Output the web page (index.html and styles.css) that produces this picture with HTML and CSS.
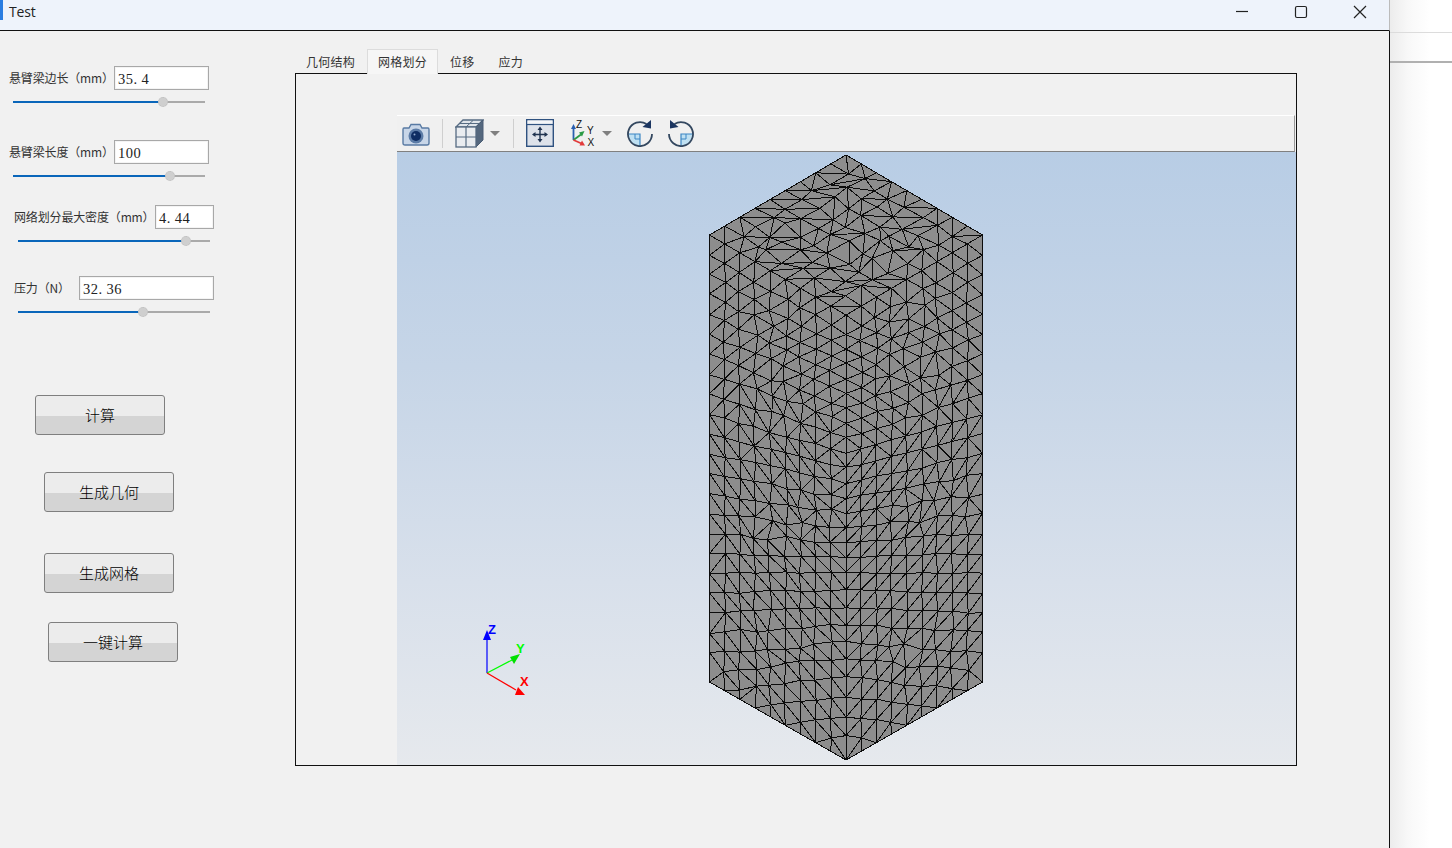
FILE: index.html
```html
<!DOCTYPE html>
<html lang="zh">
<head>
<meta charset="utf-8">
<title>Test</title>
<link rel="stylesheet" href="styles.css">
</head>
<body>
<div class="desktop">
  <div class="window">
    <header class="titlebar">
      <span class="app-icon"></span>
      <span class="title">Test</span>
      <div class="controls">
        <span class="ctrl"><svg width="14" height="14" viewBox="0 0 14 14"><path d="M1 6.500H13" class="ctrl-stroke"/></svg></span>
        <span class="ctrl"><svg width="14" height="14" viewBox="0 0 14 14"><rect x="1.500" y="1.500" width="11" height="11" rx="1.500" class="ctrl-stroke"/></svg></span>
        <span class="ctrl"><svg width="14" height="14" viewBox="0 0 14 14"><path d="M1 1L13 13M13 1L1 13" class="ctrl-stroke"/></svg></span>
      </div>
    </header>
    <main class="content">
      <aside class="sidebar">
        <div class="field f1">
          <div class="row"><label class="lbl">悬臂梁边长（mm）</label><span class="input w95">35. 4</span></div>
          <div class="slider"><div class="fill" style="width:150px"></div><span class="handle" style="left:145px"></span></div>
        </div>
        <div class="field f2">
          <div class="row"><label class="lbl">悬臂梁长度（mm）</label><span class="input w95">100</span></div>
          <div class="slider"><div class="fill" style="width:157px"></div><span class="handle" style="left:152px"></span></div>
        </div>
        <div class="field f3">
          <div class="row"><label class="lbl">网络划分最大密度（mm）</label><span class="input w59">4. 44</span></div>
          <div class="slider"><div class="fill" style="width:168px"></div><span class="handle" style="left:163px"></span></div>
        </div>
        <div class="field f4">
          <div class="row"><label class="lbl">压力（N）</label><span class="input w135">32. 36</span></div>
          <div class="slider"><div class="fill" style="width:125px"></div><span class="handle" style="left:120px"></span></div>
        </div>
        <button class="btn b1">计算</button>
        <button class="btn b2">生成几何</button>
        <button class="btn b3">生成网格</button>
        <button class="btn b4">一键计算</button>
      </aside>
      <section class="tabs">
        <nav class="tabbar">
          <span class="tab first">几何结构</span>
          <span class="tab active">网格划分</span>
          <span class="tab">位移</span>
          <span class="tab">应力</span>
        </nav>
        <div class="pane">
          <div class="viewer">
            <div class="toolbar">
              <svg class="tool t-cam" width="28" height="24" viewBox="0 0 28 24">
                <path d="M2 6H7L9 2.500H18L20 6H26Q27 6 27 7.500V21Q27 23 25 23H3Q1 23 1 21V7.500Q1 6 2 6Z" fill="#c8d6e8" stroke="#587aa3" stroke-width="1.400"/>
                <circle cx="14" cy="14" r="7.500" fill="#5b7ba6"/>
                <circle cx="14" cy="14" r="5" fill="#0e2d63"/>
                <circle cx="12.500" cy="12.500" r="1" fill="#8fa8cc"/>
              </svg>
              <span class="sep s1"></span>
              <svg class="tool t-cube" width="29" height="29" viewBox="0 0 29 29">
                <path d="M1 8L8 1H28L21 8Z" fill="#dfe4ea" stroke="#566b82" stroke-width="1.300"/>
                <path d="M21 8L28 1V21L21 28Z" fill="#54677e" stroke="#4a5d74"/>
                <rect x="1" y="8" width="20" height="20" fill="#e9ecf0" stroke="#566b82" stroke-width="1.300"/>
                <path d="M11 8V28M1 18H21" fill="none" stroke="#566b82" stroke-width="1.200"/>
                <path d="M18 1.500L11 8M4.500 4.500H24.500" fill="none" stroke="#566b82"/>
              </svg>
              <span class="caret c1"></span>
              <span class="sep s2"></span>
              <svg class="tool t-fit" width="28" height="28" viewBox="0 0 28 28">
                <rect x="0.700" y="0.700" width="26.600" height="26.600" fill="#dde2ea" stroke="#2f5280" stroke-width="1.400"/>
                <rect x="1.500" y="1.500" width="25" height="4" fill="#f3f5f8"/>
                <path d="M0.700 5.500H27.300" stroke="#2f5280" stroke-width="1.200"/>
                <path d="M14 9V22M7.500 15.500H20.500" stroke="#1f3350" stroke-width="1.400"/>
                <path d="M14 7.500L11.500 11H16.500ZM14 23.500L11.500 20H16.500ZM6 15.500L9.500 13V18ZM22 15.500L18.500 13V18Z" fill="#1f3350"/>
              </svg>
              <svg class="tool t-axes" width="24" height="30" viewBox="0 0 24 30">
                <path d="M2.500 22V10" stroke="#2a5fb0" stroke-width="1.800"/>
                <path d="M2.500 6L0 11H5Z" fill="#2a5fb0"/>
                <path d="M2.500 22L10 16.500" stroke="#2b9a45" stroke-width="1.800"/>
                <path d="M13.500 13L8 14.500L11 18.500Z" fill="#2b9a45"/>
                <path d="M2.500 22L10.500 25.500" stroke="#e23a3a" stroke-width="1.800"/>
                <path d="M14 27.500L8.500 27.500L11 22.500Z" fill="#e23a3a"/>
                <text x="5" y="10" class="axis-letter">Z</text>
                <text x="16" y="16" class="axis-letter">Y</text>
                <text x="16.500" y="28" class="axis-letter">X</text>
              </svg>
              <span class="caret c2"></span>
              <svg class="tool t-rot1" width="28" height="28" viewBox="0 0 28 28">
                <path d="M14 15V27Q7 27 3 19V15Z" fill="#bfe0f2"/>
                <path d="M2 15H14V27" fill="none" stroke="#3c86c4" stroke-width="1.200"/>
                <path d="M9 15V20H14" fill="none" stroke="#3c86c4"/>
                <path d="M20.500 5A12 12 0 1 0 26 15" fill="none" stroke="#33475f" stroke-width="1.800"/>
                <path d="M25 1L25 9.500L16.500 8Z" fill="#1b3560"/>
              </svg>
              <svg class="tool t-rot2" width="28" height="28" viewBox="0 0 28 28">
                <path d="M14 15V27Q21 27 25 19V15Z" fill="#bfe0f2"/>
                <path d="M26 15H14V27" fill="none" stroke="#3c86c4" stroke-width="1.200"/>
                <path d="M19 15V20H14" fill="none" stroke="#3c86c4"/>
                <path d="M7.500 5A12 12 0 1 1 2 15" fill="none" stroke="#33475f" stroke-width="1.800"/>
                <path d="M3 1L3 9.500L11.500 8Z" fill="#1b3560"/>
              </svg>
            </div>
            <div class="canvas">
              <svg id="scene" class="scene" width="899" height="613" viewBox="397 152 899 613">
                <g id="mesh"></g>
                <path d="M487 673V638" stroke="#0000ff" stroke-width="1.200" fill="none"/>
                <path d="M487 630L483 640H491Z" fill="#0000ff"/>
                <path d="M487 673L512 660" stroke="#00ff00" stroke-width="1.200" fill="none"/>
                <path d="M520 654L510 657L514 664Z" fill="#00e000"/>
                <path d="M487 673L516 690" stroke="#ff0000" stroke-width="1.200" fill="none"/>
                <path d="M525 695H515L518 687Z" fill="#ff0000"/>
                <text x="488" y="634" class="triad tz">Z</text>
                <text x="516" y="653" class="triad ty">Y</text>
                <text x="520" y="686" class="triad tx">X</text>
              </svg>
            </div>
          </div>
        </div>
      </section>
    </main>
  </div>
  <div class="outside">
    <div class="line-a"></div>
    <div class="line-b"></div>
  </div>
</div>
<script src="mesh.js"></script>
</body>
</html>
```
FILE: styles.css
```css
* { box-sizing: border-box; }
html, body { margin: 0; height: 100%; overflow: hidden; background: #fff; }
body { font-family: "Noto Sans CJK SC", "Liberation Sans", sans-serif; color: #222; }

.desktop { display: flex; width: 1452px; height: 848px; }
.window { width: 1390px; height: 848px; display: flex; flex-direction: column; background: #f1f1f1; }

.titlebar { height: 31px; flex: none; display: flex; align-items: flex-start; background: #eef3fb; border-bottom: 1px solid #111; border-right: 1px solid #bbb; }
.app-icon { width: 3px; height: 20px; background: #2a7de1; }
.title { margin-left: 6px; font: 14px/24px "Open Sans", "Noto Sans", sans-serif; letter-spacing: -0.200px; color: #222; }
.controls { margin-left: auto; display: flex; }
.ctrl { width: 59px; height: 23px; display: flex; align-items: center; justify-content: center; }
.ctrl-stroke { fill: none; stroke: #222; stroke-width: 1.200; }

.content { flex: 1; display: flex; border-right: 1px solid #111; min-height: 0; }
.sidebar { width: 295px; flex: none; display: flex; flex-direction: column; align-items: flex-start; }

.field { width: 200px; }
.f1 { margin: 35px 0 0 9px; }
.f2 { margin: 37px 0 0 9px; }
.f3 { margin: 28px 0 0 14px; }
.f4 { margin: 34px 0 0 14px; }
.row { display: flex; align-items: center; height: 24px; }
.lbl { flex: 1; min-width: 0; font-size: 12px; line-height: 24px; letter-spacing: -0.150px; color: #333; white-space: nowrap; }
.input { height: 24px; flex: none; display: block; background: #fff; border: 1px solid #a8a8a8; box-shadow: inset 0 0 0 1px #f4f4f4; padding-left: 3px; font: 14.500px/24px "Liberation Serif", serif; letter-spacing: 0.450px; color: #222; white-space: pre; }
.w95 { width: 95px; }
.w59 { width: 59px; }
.w135 { width: 135px; }

.slider { position: relative; width: 192px; height: 2px; margin: 11px 0 0 4px; background: #aaa; }
.fill { height: 2px; background: #0a66ba; }
.handle { position: absolute; top: -4px; width: 10px; height: 10px; border-radius: 50%; background: #cfcfcf; border: 1px dotted #bdbdbd; }

.btn { width: 130px; height: 40px; padding: 0; flex: none; border: 1px solid #7f7f7f; border-radius: 3px; background: linear-gradient(#ececec 0, #ececec 52%, #d4d4d4 52%, #d4d4d4 100%); font: 300 15px/38px "Noto Sans CJK SC", sans-serif; color: #000; }
.b1 { margin: 82px 0 0 35px; }
.b2 { margin: 37px 0 0 44px; }
.b3 { margin: 41px 0 0 44px; }
.b4 { margin: 29px 0 0 48px; }

.tabs { width: 1002px; flex: none; padding-top: 18px; display: flex; flex-direction: column; }
.tabbar { display: flex; height: 24px; align-items: flex-end; }
.tab { padding: 0 12px; font-size: 12px; line-height: 22px; letter-spacing: 0.250px; color: #333; }
.tab.first { padding: 0 12px 0 11px; }
.tab.active { height: 25px; margin-bottom: -1px; padding: 0 10px; position: relative; background: #f6f6f6; border: 1px solid #dcdcdc; border-bottom: none; line-height: 23px; }
.pane { width: 1002px; height: 693px; border: 1px solid #111; padding: 41px 0 0 101px; background: #f1f1f1; }
.viewer { width: 899px; height: 650px; display: flex; flex-direction: column; }
.toolbar { position: relative; height: 37px; flex: none; margin-right: 1px; background: #f0f0f0; border-top: 1px solid #fff; border-bottom: 1px solid #808080; border-right: 1px solid #999; }
.tool { position: absolute; display: block; }
.t-cam { left: 5px; top: 6px; }
.t-cube { left: 58px; top: 3px; }
.t-fit { left: 129px; top: 3px; }
.t-axes { left: 174px; top: 2px; }
.t-rot1 { left: 229px; top: 3px; }
.t-rot2 { left: 270px; top: 3px; }
.sep { position: absolute; top: 3px; width: 1px; height: 29px; background: #cfcfcf; }
.s1 { left: 45px; }
.s2 { left: 116px; }
.caret { position: absolute; top: 15px; width: 0; height: 0; border-left: 5px solid transparent; border-right: 5px solid transparent; border-top: 5px solid #808080; }
.c1 { left: 93px; }
.c2 { left: 205px; }
.axis-letter { font: 10px "Liberation Sans", sans-serif; fill: #111; }

.canvas { flex: 1; background: linear-gradient(#b8cde5 0, #c6d5e7 35%, #d8e0eb 70%, #e6e9ed 100%); }
.scene { display: block; }
.triad { font: bold 13px "Liberation Sans", sans-serif; }
.tz { fill: #0000ff; }
.ty { fill: #00ff00; }
.tx { fill: #ff0000; }
.mesh-fill { fill: #8d8d8d; }
.mesh-lines { fill: none; stroke: #0c0c0c; stroke-width: 1; shape-rendering: crispEdges; }

.outside { flex: 1; background: linear-gradient(90deg, #ececec 0, #f8f8f8 18px, #fff 40px); }
.line-a { height: 1px; margin-top: 32px; background: #dcdcdc; }
.line-b { height: 2px; margin-top: 28px; background: #b0b0b0; }
```
FILE: mesh.js
```js
(function () {
  var seed = 20240611;
  function rnd() {
    seed = (seed + 0x6d2b79f5) | 0;
    var t = Math.imul(seed ^ (seed >>> 15), 1 | seed);
    t = (t + Math.imul(t ^ (t >>> 7), 61 | t)) ^ t;
    return ((t ^ (t >>> 14)) >>> 0) / 4294967296;
  }
  function jit(a) { return (rnd() * 2 - 1) * a; }

  var CX = 846, LX = 709.5, RX = 982.5, TOPE = 235, BOTE = 682, TOP = 155, FRONT = 315, BOT = 760;
  var COLS = 9, segs = [];
  var patches = [[790, 400, 40], [785, 520, 45], [915, 375, 40], [935, 510, 40], [780, 650, 45], [920, 650, 45], [770, 320, 45], [910, 310, 45]];
  function amp(x, y) {
    var a = 0.6;
    patches.forEach(function (p) {
      var d = ((x - p[0]) * (x - p[0]) + (y - p[1]) * (y - p[1])) / (p[2] * p[2]);
      a += 3 * Math.exp(-d);
    });
    return a;
  }
  function slope(y) {
    if (y < 250) return 1;
    if (y < 570) return 1 - (y - 250) / 320;
    if (y < 690) return -0.2 * (y - 570) / 120;
    return -0.2;
  }
  function seg(a, b) { segs.push([a, b]); }
  function dist(p, q) { return Math.hypot(p.x - q.x, p.y - q.y); }

  var center = null;
  function buildColumns(side) {
    var columns = [];
    for (var i = 0; i <= COLS; i++) {
      var u = i / COLS, x = (side < 0 ? LX + (CX - LX) * u : RX - (RX - CX) * u);
      var top = TOPE + 80 * u, bot = BOTE + 78 * u, pts = [{ x: x, y: top }];
      if (i === COLS && center) { columns.push(center); continue; }
      for (var k = 1; k < 36; k++) {
        var base = TOPE + 19.9 * k;
        var y = base + slope(base) * 80 * u;
        if (y < top + 12 || y > bot - 10) continue;
        var a = amp(x, y);
        var nx = (i === 0 || i === COLS) ? x : x + jit(a);
        var ny = (i === COLS) ? y + jit(1) : y + jit(a);
        pts.push({ x: nx, y: ny });
      }
      pts.push({ x: x, y: bot });
      columns.push(pts);
    }
    if (!center) center = columns[COLS];
    return columns;
  }
  function zip(A, B, side) {
    var a = 0, b = 0;
    seg(A[0], B[0]);
    while (a < A.length - 1 || b < B.length - 1) {
      var advB;
      if (a === A.length - 1) advB = true;
      else if (b === B.length - 1) advB = false;
      else {
        var viaB = dist(A[a], B[b + 1]);
        var viaA = dist(A[a + 1], B[b]);
        var preferB = side < 0;
        if (rnd() < 0.04) preferB = !preferB;
        advB = preferB ? viaB < viaA * 1.3 : viaB * 1.3 < viaA;
      }
      if (advB) { seg(B[b], B[b + 1]); b++; } else { seg(A[a], A[a + 1]); a++; }
      seg(A[a], B[b]);
    }
  }
  [-1, 1].forEach(function (side) {
    var cols = buildColumns(side);
    for (var i = 0; i < COLS; i++) {
      if (side < 0) zip(cols[i], cols[i + 1], -1);
      else zip(cols[i + 1], cols[i], 1);
    }
  });

  var N = 9, g = [];
  for (var i = 0; i <= N; i++) {
    g.push([]);
    for (var j = 0; j <= N; j++) {
      var a = i / N, b = j / N;
      var x = CX + (LX - CX) * a + (RX - CX) * b;
      var y = FRONT + (TOPE - FRONT) * a + (TOPE - FRONT) * b;
      if (i > 0 && j > 0 && i < N && j < N) { x += jit(4.5); y += jit(3.5); }
      g[i].push({ x: x, y: y });
    }
  }
  for (i = 0; i < N; i++) {
    for (j = 0; j < N; j++) {
      if (j > 0) seg(g[i][j], g[i + 1][j]);
      if (i > 0) seg(g[i][j], g[i][j + 1]);
      if (i === N - 1) seg(g[N][j], g[N][j + 1]);
      if (j === N - 1) seg(g[i][N], g[i + 1][N]);
      if (rnd() < 0.55) seg(g[i][j + 1], g[i + 1][j]);
      else seg(g[i][j], g[i + 1][j + 1]);
    }
  }

  var d = segs.map(function (s) {
    return "M" + s[0].x.toFixed(1) + " " + s[0].y.toFixed(1) + "L" + s[1].x.toFixed(1) + " " + s[1].y.toFixed(1);
  }).join("");
  var NS = "http://www.w3.org/2000/svg";
  var root = document.getElementById("mesh");
  var poly = document.createElementNS(NS, "polygon");
  poly.setAttribute("points", [CX, TOP, RX, TOPE, RX, BOTE, CX, BOT, LX, BOTE, LX, TOPE].join(" "));
  poly.setAttribute("class", "mesh-fill");
  var path = document.createElementNS(NS, "path");
  path.setAttribute("d", d);
  path.setAttribute("class", "mesh-lines");
  root.appendChild(poly);
  root.appendChild(path);
})();
```
